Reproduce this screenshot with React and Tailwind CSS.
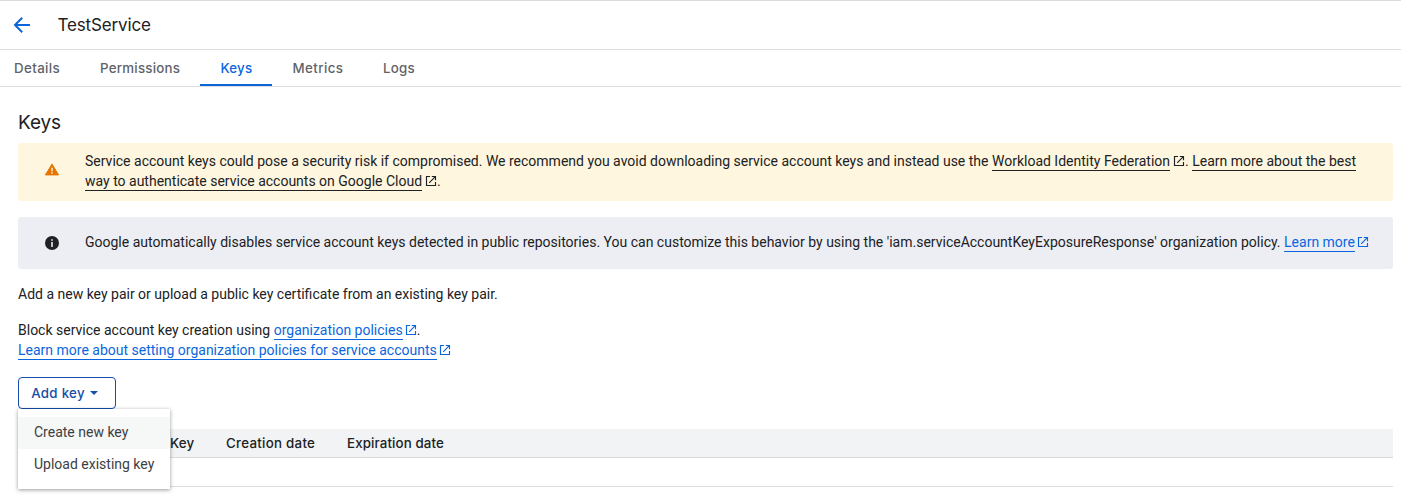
import React from "react";

const TABS = [
  { label: "Details", box: "w-[74px] pl-[14px]", text: "tracking-[0.38px]" },
  { label: "Permissions", box: "w-[126px] pl-[26px]", text: "tracking-[0.23px]" },
  { label: "Keys", box: "w-[72px] pl-[20.5px]", text: "tracking-[0.2px]", active: true },
  { label: "Metrics", box: "w-[91px] pl-[20.5px]", text: "tracking-[0.4px]" },
  { label: "Logs", box: "w-[72px] pl-[20px]", text: "tracking-[0.25px]" },
];

function ExternalIcon({ className = "" }) {
  return (
    <svg
      viewBox="0 0 12 12"
      fill="none"
      stroke="currentColor"
      strokeWidth="1.15"
      className={`inline-block h-3 w-3 align-[-1px] ${className}`}
    >
      <path d="M5 1.5H1.5V10.5H10.5V7" />
      <path d="M6.8 1.5H10.5V5.2M10.3 1.7L4.2 7.8" />
    </svg>
  );
}

function Link({ children, className = "" }) {
  return <a className={`border-b border-current pb-px ${className}`}>{children}</a>;
}

function Header() {
  return (
    <header className="flex h-[50px] items-center border-y border-[#dadce0] pl-3">
      <svg viewBox="0 0 20 20" className="h-5 w-5" fill="none" stroke="#0b66de" strokeWidth="2">
        <path d="M18 10H3.4M10.2 2.8L3 10l7.2 7.2" />
      </svg>
      <h1 className="ml-[25.5px] font-[Inter] text-[17px] leading-6 tracking-[-0.15px] whitespace-nowrap">
        TestService
      </h1>
    </header>
  );
}

function Tabs() {
  return (
    <nav className="flex h-[37px] border-b border-[#dadce0] font-[Inter] text-[13.3px] font-medium text-[#5f6368]">
      {TABS.map((t) => (
        <div
          key={t.label}
          className={`${t.box} flex h-9 shrink-0 items-center border-b-2 ${
            t.active ? "border-[#0b66de] text-[#0b66de]" : "border-transparent"
          }`}
        >
          <span className={`${t.text} pt-px whitespace-nowrap`}>{t.label}</span>
        </div>
      ))}
    </nav>
  );
}

function AddKey() {
  return (
    <div className="relative mt-[17px] w-[98px]">
      <button className="flex h-8 w-[98px] items-center rounded-[4px] border border-[#174ea6] pl-3 font-[Inter] text-[13.3px] font-medium tracking-[0.3px] whitespace-nowrap text-[#174ea6]">
        <span className="w-[54px]">Add key</span>
        <svg viewBox="0 0 8 4" className="ml-[5px] h-1 w-2" fill="currentColor">
          <path d="M0 0h8L4 4z" />
        </svg>
      </button>
      <div className="absolute top-8 left-0 z-10 w-[152px] bg-white py-2 text-[#3c4043] shadow-[0_1px_4px_rgba(0,0,0,0.4)]">
        <div className="flex h-8 items-center bg-[#f6f7f7] pb-0.5 pl-4 leading-5 whitespace-nowrap">
          Create new key
        </div>
        <div className="flex h-8 items-center pb-0.5 pl-4 leading-5 whitespace-nowrap">Upload existing key</div>
      </div>
    </div>
  );
}

export default function App() {
  return (
    <div className="h-[501px] w-[1401px] overflow-hidden bg-white font-[Roboto,sans-serif] text-sm leading-5 text-[#202124]">
      <Header />
      <Tabs />
      <main className="w-[1393px] pl-[18px]">
        <h2 className="pt-6 font-[Inter] text-[19px] leading-6 tracking-[-0.1px]">Keys</h2>
        <div className="mt-2 flex h-[58px] items-start rounded-[3px] bg-[#fef6df] pt-2 pl-[26px]">
          <svg viewBox="0 0 16 14" className="mt-3 h-3.5 w-4" fill="#e37400">
            <path d="M8 0.9L14.7 12H1.3z" stroke="#e37400" strokeWidth="0.8" strokeLinejoin="round" />
            <path d="M7.3 4.8h1.4v3.4H7.3zM7.3 9.3h1.4v1.4H7.3z" fill="#fef6df" />
          </svg>
          <p className="ml-[25px] w-[1290px]">
            Service account keys could pose a security risk if compromised. We recommend you avoid downloading service
            account keys and instead use the <Link>Workload Identity Federation</Link>
            <ExternalIcon className="ml-[3px]" />. <Link>
              Learn more about the best
              <br />
              way to authenticate service accounts on Google Cloud
            </Link>
            <ExternalIcon className="ml-[3px]" />.
          </p>
        </div>
        <div className="mt-4 flex h-[52px] items-center rounded-[3px] bg-[#edeef3] pl-[27px]">
          <svg viewBox="0 0 14 14" className="h-3.5 w-3.5">
            <circle cx="7" cy="7" r="7" fill="#202124" />
            <path d="M6.2 3.2h1.6v1.6H6.2zM6.2 6h1.6v5H6.2z" fill="#edeef3" />
          </svg>
          <p className="ml-[26px] pb-0.5 whitespace-nowrap">
            Google automatically disables service account keys detected in public repositories. You can customize this
            behavior by using the 'iam.serviceAccountKeyExposureResponse' organization policy.{" "}
            <span className="text-[#0b66de]">
              <Link>Learn more</Link>
              <ExternalIcon className="ml-0.5" />
            </span>
          </p>
        </div>
        <p className="mt-[15px]">Add a new key pair or upload a public key certificate from an existing key pair.</p>
        <p className="mt-4">
          Block service account key creation using{" "}
          <span className="text-[#0b66de]">
            <Link>organization policies</Link>
            <ExternalIcon className="ml-0.5" />
          </span>
          .
          <br />
          <span className="text-[#0b66de]">
            <Link>Learn more about setting organization policies for service accounts</Link>
            <ExternalIcon className="ml-0.5" />
          </span>
        </p>
        <AddKey />
        <div className="mt-5 flex h-[29px] items-center border-b border-[#dadce0] bg-[#f1f3f4] pl-[152px] font-[Inter] text-[13.3px] font-medium whitespace-nowrap">
          <span className="w-[56px] tracking-[0.2px]">Key</span>
          <span className="w-[121px] tracking-[0.28px]">Creation date</span>
          <span className="tracking-[0.13px]">Expiration date</span>
        </div>
        <div className="h-[29px] border-b border-[#dadce0]" />
      </main>
    </div>
  );
}
